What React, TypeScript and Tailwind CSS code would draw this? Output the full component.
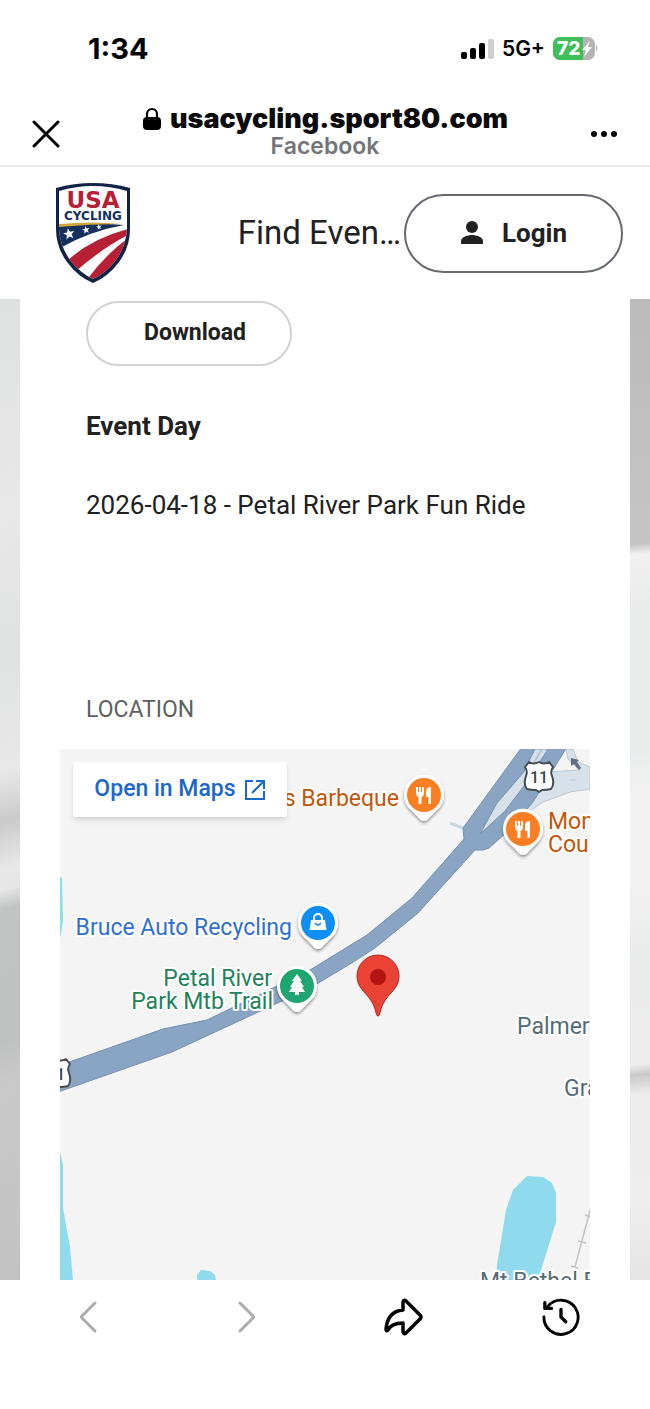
import type { ReactNode } from 'react'

const shieldPath =
  'M-10 -15 Q-5 -12 0 -15 Q5 -12 10 -15 L14 -10 Q11 -6 13 -1 Q16 7 12 12 Q8 13 3 13 L0 15 L-3 13 Q-8 13 -12 12 Q-16 7 -13 -1 Q-11 -6 -14 -10 Z'

function StatusBar() {
  return (
    <div className="flex h-[98px] items-center justify-between pl-[88px] pr-[51px]">
      <span className="text-[29px] font-bold text-black">1:34</span>
      <div className="flex items-center gap-2">
        <svg width="33" height="20" viewBox="0 0 33 20" aria-hidden="true">
          <rect x="0" y="13" width="6" height="7" rx="2" />
          <rect x="9" y="9" width="6" height="11" rx="2" />
          <rect x="18" y="4" width="6" height="16" rx="2" />
          <rect x="27" y="0" width="6" height="20" rx="2" fill="#cfcfcf" />
        </svg>
        <span className="text-[21px] font-semibold text-black">5G+</span>
        <svg width="46" height="24" viewBox="0 0 46 24" className="font-['Inter',sans-serif]">
          <clipPath id="battery">
            <rect width="42" height="23" rx="7" />
          </clipPath>
          <g clipPath="url(#battery)">
            <rect width="42" height="23" fill="#b4b4b6" />
            <rect width="30" height="23" fill="#3fbf5a" />
          </g>
          <path d="M43 8 Q46 11.5 43 15 Z" fill="#b4b4b6" />
          <text x="4" y="18" fontSize="19" fontWeight="800" fill="#fff">72</text>
          <path d="M37 4 L29 13 H33 L31 20 L39 10 H35 Z" fill="#fff" />
        </svg>
      </div>
    </div>
  )
}

function BrowserHeader() {
  return (
    <header className="flex h-[69px] items-center justify-between border-b-2 border-[#e9e9e9] pl-8 pr-8">
      <button aria-label="Close" className="pt-1">
        <svg width="28" height="28" viewBox="0 0 28 28" fill="none" stroke="#000" strokeWidth="3" strokeLinecap="round">
          <path d="M2 2 L26 26 M26 2 L2 26" />
        </svg>
      </button>
      <div className="flex flex-col items-center">
        <div className="flex items-center gap-2">
          <svg width="20" height="24" viewBox="0 0 20 24" aria-hidden="true">
            <rect x="1" y="10" width="18" height="13" rx="4" />
            <path d="M5 11 V7 a5 5 0 0 1 10 0 V11" fill="none" stroke="#000" strokeWidth="2.2" />
          </svg>
          <span className="text-[27px] leading-[29px] font-black text-[#0a0a0a]">usacycling.sport80.com</span>
        </div>
        <span className="text-[23px] leading-[26px] font-semibold text-[#737578]">Facebook</span>
      </div>
      <button aria-label="More options" className="pt-1">
        <svg width="28" height="8" viewBox="0 0 28 8">
          <circle cx="4" cy="4" r="3" />
          <circle cx="14" cy="4" r="3" />
          <circle cx="24" cy="4" r="3" />
        </svg>
      </button>
    </header>
  )
}

function Star({ x, y, r }: { x: number; y: number; r: number }) {
  return (
    <path
      transform={`translate(${x} ${y}) rotate(-12) scale(${r})`}
      d="M0 -1 L.25 -.33 L.95 -.31 L.4 .12 L.59 .81 L0 .42 L-.59 .81 L-.4 .12 L-.95 -.31 L-.25 -.33 Z"
      fill="#fff"
    />
  )
}

function Logo() {
  return (
    <svg width="74" height="100" viewBox="0 0 74 100" role="img" aria-label="USA Cycling">
      <defs>
        <clipPath id="crest">
          <path d="M3 8 Q20 3 37 3 Q54 3 71 8 V46 Q70 63 60 77 Q50 90 37 96 Q24 90 14 77 Q4 63 3 46 Z" />
        </clipPath>
      </defs>
      <path d="M0 5 Q18 0 37 0 Q56 0 74 5 V46 Q74 64 63 79 Q52 94 37 100 Q22 94 11 79 Q0 64 0 46 Z" fill="#0e2347" />
      <g clipPath="url(#crest)">
        <rect width="74" height="100" fill="#fff" />
        <path d="M0 43 Q34 39 68 42 Q34 48 4 65 L0 66 Z" fill="#14305e" />
        <path d="M3 41 Q35 38 66 41 Q34 41 3 44 Z" fill="#d2a63c" />
        <path d="M10 79 Q34 56 72 46 V52 Q48 64 20 88 Z" fill="#b71f34" />
        <path d="M30 98 Q48 73 72 55 V72 L44 100 Z" fill="#b71f34" />
        <Star x={13} y={51} r={6} />
        <Star x={30} y={47} r={4} />
        <Star x={43} y={44} r={3} />
      </g>
      <g textAnchor="middle" fontWeight="700" className="font-['DejaVu_Sans',sans-serif]">
        <text x="37" y="25" fontSize="23" fill="#b71f34">USA</text>
        <text x="37" y="37" fontSize="12" fill="#14305e">CYCLING</text>
      </g>
    </svg>
  )
}

function SiteNav() {
  return (
    <nav className="flex h-[132px] items-center pl-14 pr-[27px] font-['Roboto',sans-serif] text-[#212121]">
      <a href="#home">
        <Logo />
      </a>
      <a href="#events" className="ml-auto text-[33px] whitespace-nowrap">Find Even…</a>
      <button className="ml-[3px] flex h-[79px] w-[219px] items-center justify-center gap-[18px] rounded-full border-2 border-[#666a70] text-[26px] font-bold">
        <svg width="24" height="24" viewBox="0 0 24 24" fill="currentColor" aria-hidden="true">
          <circle cx="12" cy="6" r="6" />
          <path d="M1 23 V20 C1 16 8 14 12 14 S23 16 23 20 V23 Z" />
        </svg>
        Login
      </button>
    </nav>
  )
}

function Poi({ x, y, color, children }: { x: number; y: number; color: string; children: ReactNode }) {
  return (
    <g transform={`translate(${x} ${y})`}>
      <g filter="url(#pinShadow)">
        <path d="M0 26 Q-3 26 -6 22 L-15 13 A20 20 0 1 1 15 13 L6 22 Q3 26 0 26 Z" fill="#fff" />
      </g>
      <circle r="17" fill={color} />
      {children}
    </g>
  )
}

function Cutlery() {
  return (
    <g fill="#fff">
      <path d="M-8 -8 H-6 V-3 H-5 V-8 H-3 V-3 H-2 V-8 H0 V-2 Q0 1 -2.5 2 V9 H-5.500 V2 Q-8 1 -8 -2 Z" />
      <path d="M7 -8 V9 H4.500 V2 H2 V-3 Q2 -8 7 -8 Z" />
    </g>
  )
}

function RouteShield({ x, y }: { x: number; y: number }) {
  return (
    <g transform={`translate(${x} ${y})`}>
      <path d={shieldPath} fill="#fff" stroke="#454b52" strokeWidth="2" strokeLinejoin="round" />
      <text y="6" textAnchor="middle" fontSize="16" fontWeight="500" fill="#3a3f45">11</text>
    </g>
  )
}

function EventMap() {
  return (
    <svg viewBox="0 0 530 531" className="block w-full bg-[#f4f4f4] font-['Roboto',sans-serif]" role="img" aria-label="Map of the event location">
      <defs>
        <filter id="pinShadow" x="-30%" y="-30%" width="160%" height="170%">
          <feDropShadow dx="0" dy="2" stdDeviation="1.500" floodOpacity="0.4" />
        </filter>
      </defs>

      {/* Water */}
      <g fill="#90daee">
        <path d="M0 128 L2 129 L3 173 L0 190 Z" />
        <path d="M0 403 L3 416 V459 L10 498 L13 531 H0 Z" />
        <path d="M137 531 V526 L141 521 L150 522 L155 526 L156 531 Z" />
        <path d="M467 427 L483 428 L492 434 L496 444 V473 L478 531 H437 V516 L446 461 L453 441 Z" />
      </g>

      {/* Roads */}
      <path d="M390 74 L405 80" stroke="#cbd8e4" strokeWidth="3" />
      <path d="M506 0 H513 L518 13 L530 18 V40 L510 43 L483 53 L467 64 L470 45 L490 23 L519 21 L508 10 Z" fill="#d6e1ea" stroke="#b9c8d7" strokeWidth="1" />
      <path d="M509 31 H516" stroke="#b9c8d7" strokeWidth="1" />
      <path
        d="M462 -2 L403 79 L404 90 L352 149 L307 186 L250 221 L147 271 L103 280 L-2 317 V343 L112 303 L153 284 L250 239 L290 215 L315 199 L358 164 L415 101 L423 101 L429 99 L447 83 L473 53 L507 -2 Z"
        fill="#8aa4c3"
        stroke="#7590b1"
        strokeWidth="1"
      />
      <path d="M420 85 L437 54 L463 24 L475 0 H488 L467 33 L445 62 Z" fill="#d6e1ea" stroke="#7590b1" strokeWidth="1" />
      <path d="M482 0 L474 14" stroke="#b4c5d6" strokeWidth="2" />
      <path d="M511 9 L519 11 L517 13 L521 19 L519 21 L514 15 L511 17 Z" fill="#5f6d84" />

      {/* Railway */}
      <path d="M531 458 L515 518 M525 466 L530 468 M518 492 L526 494 M511 517 L518 519" stroke="#c3c4c8" strokeWidth="1.500" />

      <RouteShield x={479} y={28} />
      <RouteShield x={-4} y={325} />

      <g fontSize="23" stroke="#fff" strokeWidth="4" strokeLinejoin="round" paintOrder="stroke">
        <g fill="#c2570c">
          <text x="339" y="57" textAnchor="end">s Barbeque</text>
          <text x="488" y="80">Mon</text>
          <text x="488" y="103">Cou</text>
        </g>
        <text x="232" y="186" textAnchor="end" fill="#2f6fd0">Bruce Auto Recycling</text>
        <g fill="#22835a" textAnchor="end">
          <text x="212" y="237">Petal River</text>
          <text x="213" y="260">Park Mtb Trail</text>
        </g>
        <g fill="#566b78">
          <text x="457" y="285">Palmer</text>
          <text x="504" y="347">Gra</text>
          <text x="420" y="540">Mt Bethel B</text>
        </g>
      </g>

      <Poi x={364} y={46} color="#fb7e23">
        <Cutlery />
      </Poi>
      <Poi x={463} y={80} color="#fb7e23">
        <Cutlery />
      </Poi>
      <Poi x={258} y={174} color="#0d8ff8">
        <path d="M-7 -3 H7 L8.500 7 H-8.500 Z" fill="#fff" />
        <path d="M-4 -3 V-5 a4 4 0 0 1 8 0 V-3" fill="none" stroke="#fff" strokeWidth="2" />
        <path d="M-3 0 Q0 4 3 0" fill="none" stroke="#0d8ff8" strokeWidth="1.500" />
      </Poi>
      <Poi x={237} y={237} color="#1fa670">
        <path d="M0 -12 L5 -5 H3 L7 1 H5 L8 6 H2 V9 H-2 V6 H-8 L-5 1 H-7 L-3 -5 H-5 Z" fill="#fff" />
      </Poi>

      {/* Event marker */}
      <path
        d="M318 267 C316 267 316 261 313 255 C307 243 297 240 297 227 A21 21 0 0 1 339 227 C339 240 329 243 323 255 C320 261 320 267 318 267 Z"
        fill="#ea4335"
        stroke="#b3261e"
        strokeWidth="1"
      />
      <circle cx="318" cy="228" r="8" fill="#b31412" />
    </svg>
  )
}

function EventPage() {
  return (
    <main className="flex font-['Roboto',sans-serif] text-[#212121]">
      <div className="w-5 shrink-0 bg-[linear-gradient(165deg,#dfe1e0_0%,#e8e8e8_22%,#e0e2e1_36%,#e8e8e8_48%,#cbcbcb_53%,#e8e8e8_58%,#e6e6e6_60%,#c2c4c3_62%,#bfc1c0_75%,#c9c9c9_80%,#c2c2c2_100%)]" />
      <div className="min-w-0 flex-1 px-10 pt-[2px]">
        <div className="px-[26px]">
          <button className="flex h-[65px] items-center rounded-full border-2 border-[#d2d2d2] pl-14 pr-11 text-[23px] font-bold">
            Download
          </button>
          <h2 className="mt-[45px] text-[26px] leading-[30px] font-bold">Event Day</h2>
          <p className="mt-[49px] text-[26px] leading-[30px]">2026-04-18 - Petal River Park Fun Ride</p>
          <h3 className="mt-[175px] text-[23px] leading-[30px] text-[#5f5f5f]">LOCATION</h3>
        </div>
        <div className="relative mt-6">
          <EventMap />
          <a
            href="#maps"
            className="absolute top-[13px] left-[13px] flex h-[55px] w-[214px] items-center justify-center gap-2 rounded-xs bg-white text-[23px] font-medium text-[#1b67cc] shadow-md"
          >
            Open in Maps
            <svg width="22" height="22" viewBox="0 0 22 22" fill="none" stroke="currentColor" strokeWidth="2" aria-hidden="true">
              <path d="M9 2 H2 V20 H20 V12 M12 2 H20 V10 M20 2 L8 14" />
            </svg>
          </a>
        </div>
      </div>
      <div className="w-5 shrink-0 bg-[linear-gradient(175deg,#bbbbbb_0%,#c5c5c5_25%,#f0f0f0_26%,#e9ebea_32%,#eaecec_46%,#f1f1f1_50%,#f1f1f1_60%,#e9ebea_67%,#ececec_78%,#c9c9c9_79%,#ececec_81%,#eeeeee_92%,#e4e4e4_100%)]" />
    </main>
  )
}

function BottomBar() {
  return (
    <footer className="grid h-[129px] grid-cols-4 items-center justify-items-center px-2 pb-14">
      <button aria-label="Back" disabled>
        <svg width="40" height="40" viewBox="0 0 40 40" fill="none" stroke="#acacae" strokeWidth="3" strokeLinecap="round" strokeLinejoin="round">
          <path d="M28 6 L15 19 Q14 20 15 21 L28 34" />
        </svg>
      </button>
      <button aria-label="Forward" disabled>
        <svg width="40" height="40" viewBox="0 0 40 40" fill="none" stroke="#acacae" strokeWidth="3" strokeLinecap="round" strokeLinejoin="round">
          <path d="M14 6 L27 19 Q28 20 27 21 L14 34" />
        </svg>
      </button>
      <button aria-label="Share">
        <svg width="40" height="40" viewBox="0 0 40 40" fill="none" stroke="#000" strokeWidth="3.500" strokeLinecap="round" strokeLinejoin="round">
          <path d="M19 13 V6 Q19 2 22 4 L36 18 Q38 20 36 22 L22 36 Q19 38 19 34 V26 C10 26 6 29 4 33 Q2 35 2 32 C3 21 8 14 19 13 Z" />
        </svg>
      </button>
      <button aria-label="History" className="pr-1">
        <svg width="38" height="38" viewBox="0 0 40 40" fill="none" stroke="#000" strokeWidth="4" strokeLinecap="round" strokeLinejoin="round">
          <path d="M2 20 A18 18 0 1 0 6 9" strokeWidth="3" />
          <path d="M3 5 V11 H10" strokeWidth="3.500" />
          <path d="M20 12 V20 L25 25" strokeWidth="3.500" />
        </svg>
      </button>
    </footer>
  )
}

export default function App() {
  return (
    <div className="min-h-screen bg-white font-['Inter',sans-serif]">
      <StatusBar />
      <BrowserHeader />
      <SiteNav />
      <EventPage />
      <BottomBar />
    </div>
  )
}
